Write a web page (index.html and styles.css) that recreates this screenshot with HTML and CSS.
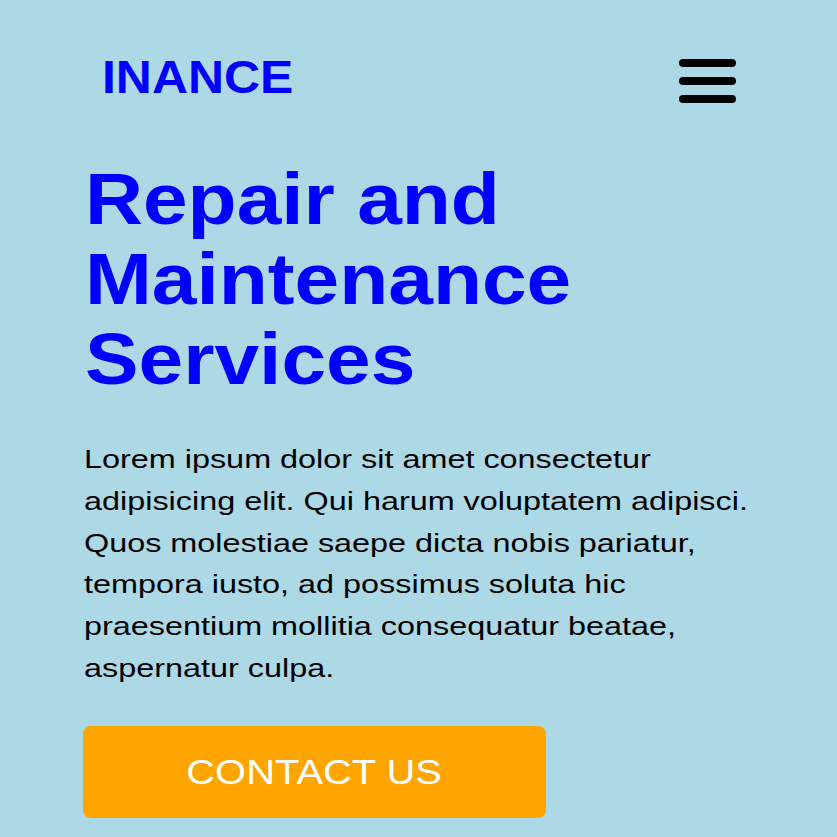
FILE: index.html
```html
<!DOCTYPE html>
<html lang="en">
<head>
<meta charset="utf-8">
<title>Inance</title>
<link rel="stylesheet" href="styles.css">
</head>
<body>
<header class="site-header">
  <a class="logo" href="#">INANCE</a>
  <button class="menu-toggle" aria-label="Menu">
    <span class="bar"></span>
    <span class="bar"></span>
    <span class="bar"></span>
  </button>
</header>
<main class="hero">
  <h1 class="hero-title">Repair and Maintenance Services</h1>
  <p class="hero-text">Lorem ipsum dolor sit amet consectetur adipisicing elit. Qui harum voluptatem adipisci. Quos molestiae saepe dicta nobis pariatur, tempora iusto, ad possimus soluta hic praesentium mollitia consequatur beatae, aspernatur culpa.</p>
  <a class="btn-contact" href="#"><span class="btn-label">CONTACT US</span></a>
</main>
</body>
</html>
```
FILE: styles.css
```css
html, body {
  margin: 0;
  padding: 0;
}
body {
  background: #add8e6;
  font-family: "Liberation Sans", Arial, sans-serif;
  color: #000;
}
.site-header {
  display: flex;
  justify-content: space-between;
  align-items: flex-start;
  padding: 50px 101px 0 102px;
}
.logo {
  display: block;
  font-size: 46px;
  font-weight: bold;
  color: #0000ff;
  text-decoration: none;
  line-height: 54px;
  transform: scaleX(1.085);
  transform-origin: left center;
}
.menu-toggle {
  display: flex;
  flex-direction: column;
  gap: 10.5px;
  margin-top: 9px;
  background: none;
  border: 0;
  padding: 0;
  width: 57px;
}
.bar {
  display: block;
  height: 7.5px;
  width: 100%;
  background: #000;
  border-radius: 4px;
}
.hero {
  padding: 55px 80px 0 84px;
}
.hero-title {
  margin: 0 0 0 1px;
  font-size: 72px;
  line-height: 80px;
  font-weight: bold;
  color: #0000ff;
  transform: scaleX(1.115);
  transform-origin: left top;
}
.hero-text {
  margin: 40px 0 0;
  width: 550px;
  font-size: 26px;
  line-height: 41.8px;
  transform: scaleX(1.245);
  transform-origin: left top;
}
.btn-contact {
  display: flex;
  align-items: center;
  justify-content: center;
  margin: 36px 0 0 -1px;
  width: 463px;
  height: 92px;
  background: #ffa500;
  color: #fff;
  border-radius: 8px;
  font-size: 35px;
  text-decoration: none;
}
.btn-label {
  display: inline-block;
  transform: scaleX(1.14);
}
```
